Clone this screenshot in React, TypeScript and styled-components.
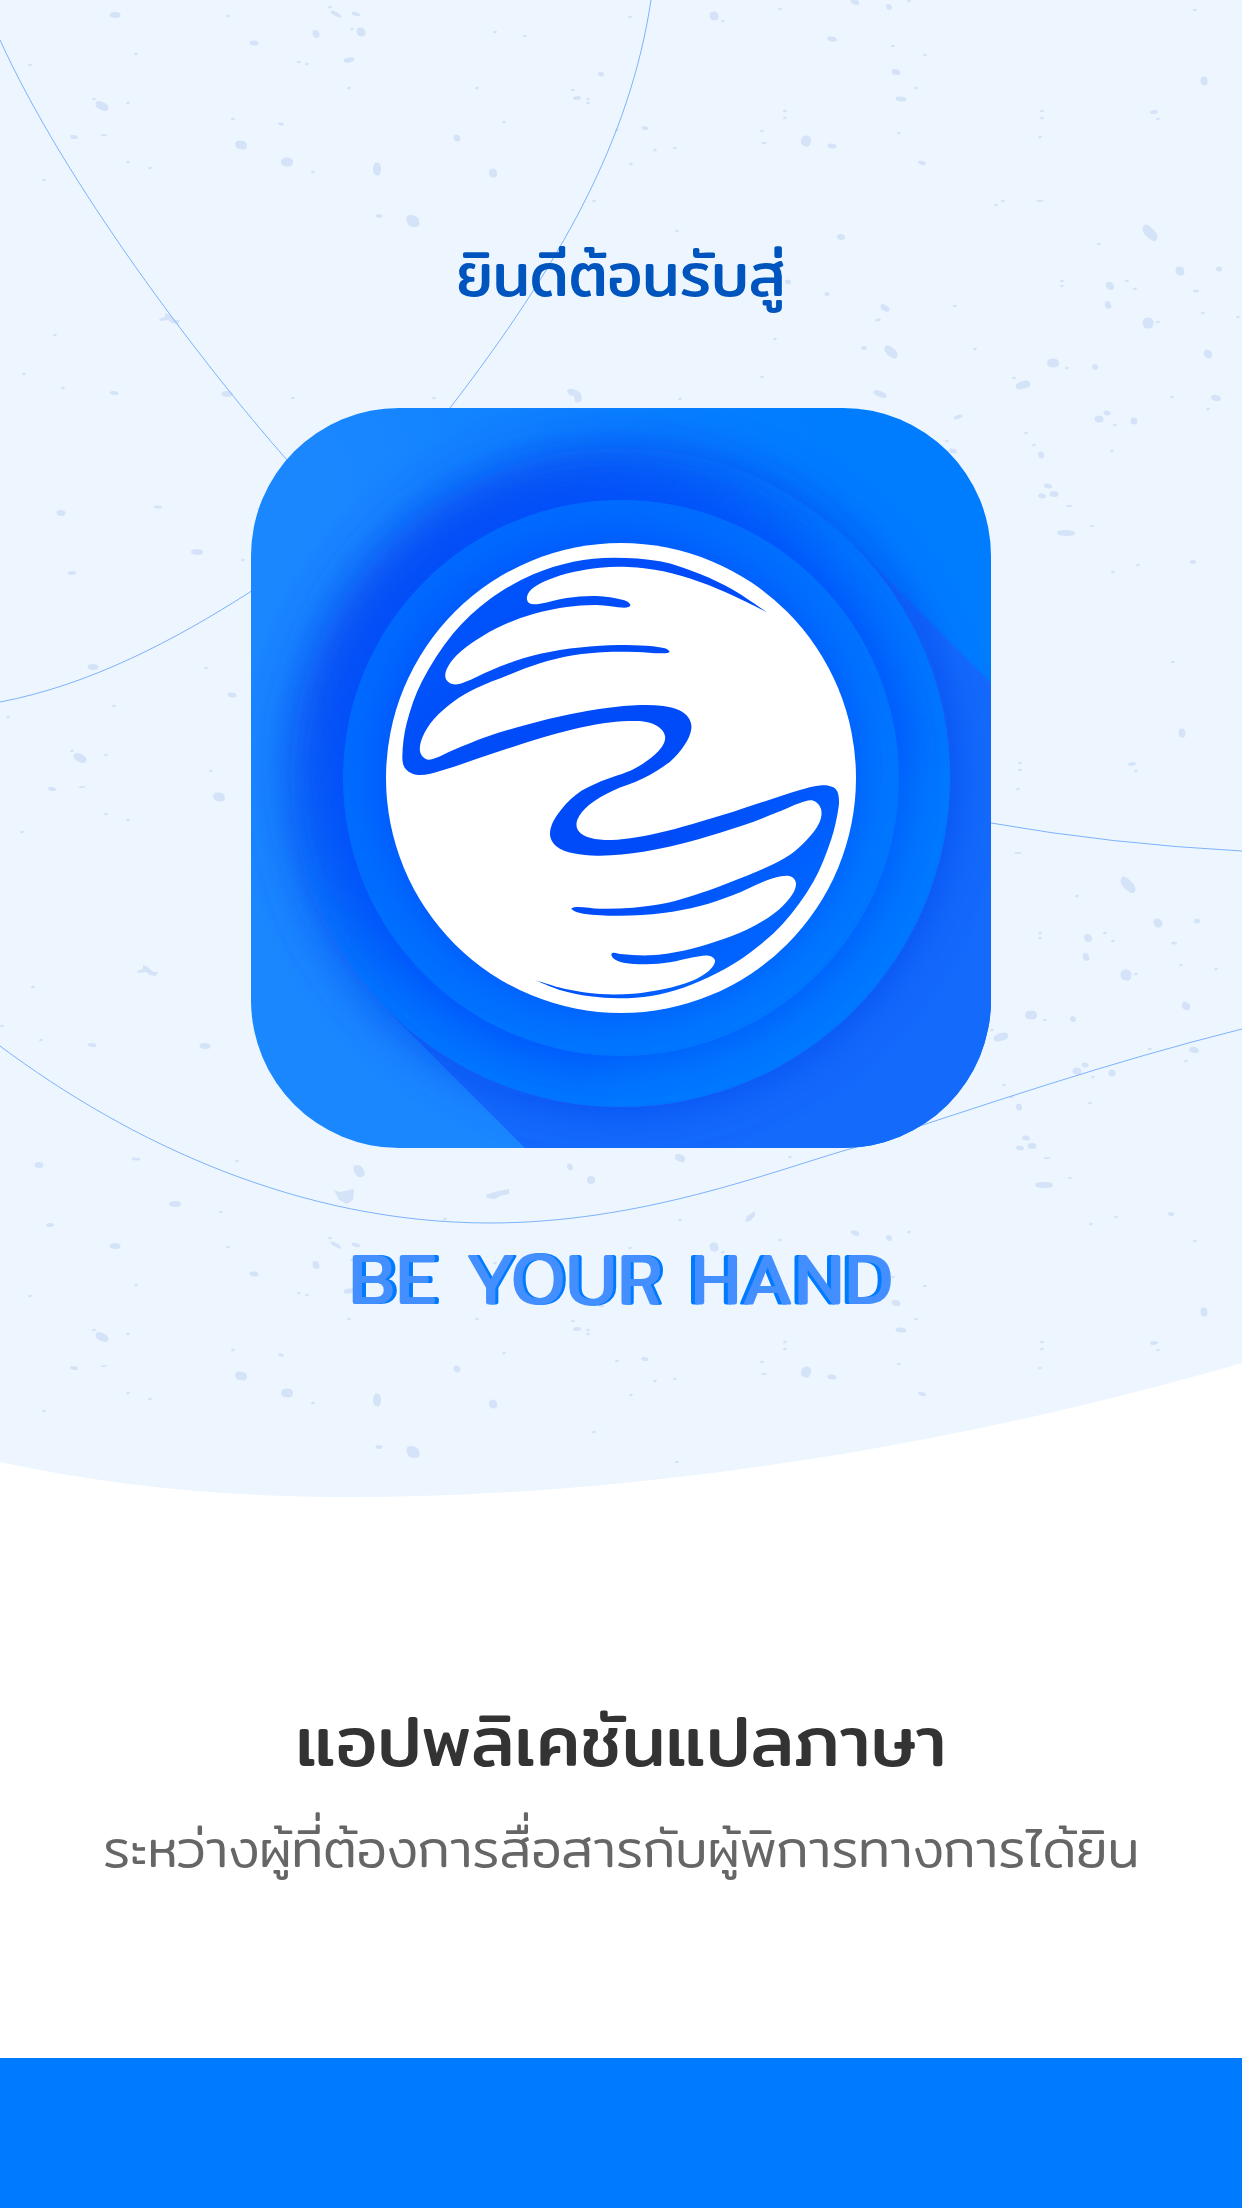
import React from "react";
import styled, { createGlobalStyle } from "styled-components";

const GlobalStyle = createGlobalStyle`
  *, *::before, *::after { box-sizing: border-box; }
  html, body, #root { margin: 0; min-height: 100vh; }
  body {
    background: #ffffff;
    font-family: Mitr, Prompt, Kanit, "Noto Sans Thai", "Noto Sans", sans-serif;
  }
`;

const Page = styled.main`
  display: flex;
  flex-direction: column;
  min-height: 100vh;
  overflow: hidden;
`;

const Hero = styled.header`
  position: relative;
  isolation: isolate;
  display: flex;
  flex-direction: column;
  align-items: center;
  padding: 230px 24px 182px;
`;

const Backdrop = styled.svg`
  position: absolute;
  z-index: -1;
  top: 0;
  left: 0;
  width: 100%;
  height: 100%;
`;

const Welcome = styled.p`
  margin: 0 0 90px;
  color: #0054bd;
  font-size: 60px;
  font-weight: 400;
  line-height: 88px;
`;

const Logo = styled.svg`
  display: block;
  width: 100%;
  max-width: 740px;
  height: auto;
  border-radius: 20%;
`;

const BrandName = styled.h1`
  margin: 90px 0 0;
  color: #448fff;
  font-size: 72px;
  font-weight: 400;
  line-height: 80px;
`;

const BrandWord = styled.span<{ $shade: number }>`
  text-shadow: ${({ $shade }) => $shade}px 0 0 #007bff;
`;

const Intro = styled.section`
  flex: 1;
  display: flex;
  flex-direction: column;
  align-items: center;
  gap: 8px;
  padding: 190px 24px 24px;
  text-align: center;
`;

const Headline = styled.h2`
  margin: 0;
  color: #333333;
  font-size: 71px;
  font-weight: 400;
  line-height: 100px;
`;

const Summary = styled.p`
  margin: 0;
  color: #666666;
  font-size: 52px;
  font-weight: 300;
  line-height: 100px;
`;

const Footer = styled.footer`
  height: 150px;
  background: #007bff;
`;

type Point = [number, number];

/* Draws a closed smooth curve through the points; the listed ones stay sharp. */
function smoothPath(points: Point[], sharp: Point[]): string {
  const n = points.length;
  const isSharp = (p: Point) => sharp.some((s) => s[0] === p[0] && s[1] === p[1]);
  const tangents = points.map((p, i) => {
    if (isSharp(p)) return [0, 0];
    const a = points[(i + n - 1) % n];
    const b = points[(i + 1) % n];
    const len = Math.hypot(b[0] - a[0], b[1] - a[1]) || 1;
    return [(b[0] - a[0]) / len, (b[1] - a[1]) / len];
  });
  let d = `M${points[0].join(" ")}`;
  for (let i = 0; i < n; i++) {
    const j = (i + 1) % n;
    const p = points[i];
    const q = points[j];
    const h = Math.hypot(q[0] - p[0], q[1] - p[1]) / 3;
    const c = [
      p[0] + tangents[i][0] * h,
      p[1] + tangents[i][1] * h,
      q[0] - tangents[j][0] * h,
      q[1] - tangents[j][1] * h,
      q[0],
      q[1],
    ];
    d += `C${c.map((v) => v.toFixed(1)).join(" ")}`;
  }
  return `${d}Z`;
}

const handPoints: Point[] = [
  [1545, 611], [1447, 546], [1347, 498], [1227, 460], [1087, 449], [967, 461], [847, 499], [717, 573],
  [607, 676], [512, 822], [467, 946], [454, 1046], [464, 1083], [502, 1101], [567, 1089], [727, 1036],
  [867, 991], [967, 964], [1057, 946], [1137, 939], [1207, 948], [1242, 984], [1222, 1030], [1150, 1082],
  [1050, 1120], [975, 1160], [918, 1222], [897, 1276], [915, 1314], [967, 1336], [1047, 1343], [1177, 1331],
  [1337, 1295], [1477, 1252], [1587, 1210], [1647, 1185], [1687, 1178], [1710, 1203], [1705, 1244], [1667, 1296],
  [1617, 1340], [1547, 1378], [1447, 1419], [1347, 1456], [1247, 1485], [1147, 1499], [1047, 1502], [977, 1497],
  [962, 1504], [997, 1517], [1107, 1523], [1237, 1515], [1347, 1494], [1447, 1461], [1537, 1421], [1590, 1405],
  [1623, 1407], [1635, 1430], [1617, 1469], [1567, 1518], [1487, 1565], [1397, 1600], [1297, 1628], [1197, 1642],
  [1107, 1638], [1083, 1636], [1086, 1650], [1117, 1664], [1187, 1669], [1257, 1663], [1327, 1648], [1373, 1643],
  [1392, 1658], [1374, 1688], [1322, 1719], [1240, 1743], [1147, 1757], [1047, 1758], [947, 1744], [852, 1716],
  [927, 1746], [1017, 1765], [1107, 1771], [1200, 1764], [1297, 1739], [1397, 1696], [1497, 1634], [1597, 1546],
  [1687, 1421], [1740, 1296], [1763, 1196], [1761, 1156], [1747, 1138], [1712, 1132], [1647, 1146], [1547, 1178],
  [1447, 1211], [1347, 1241], [1247, 1269], [1157, 1288], [1080, 1296], [1017, 1289], [982, 1268], [979, 1235],
  [1014, 1191], [1084, 1149], [1177, 1111], [1257, 1061], [1302, 1009], [1321, 962], [1313, 930], [1285, 907],
  [1237, 894], [1167, 891], [1067, 900], [957, 919], [827, 950], [707, 986], [607, 1026], [552, 1051],
  [524, 1053], [507, 1030], [515, 986], [549, 933], [607, 881], [677, 840], [767, 803], [867, 766],
  [967, 742], [1067, 732], [1157, 732], [1235, 736], [1255, 730], [1225, 718], [1147, 712], [1047, 713],
  [927, 726], [817, 751], [717, 788], [642, 822], [607, 829], [585, 814], [587, 784], [617, 742],
  [677, 695], [757, 651], [847, 618], [947, 597], [1037, 591], [1122, 599], [1138, 591], [1117, 576],
  [1037, 564], [947, 570], [867, 587], [835, 586], [828, 566], [845, 541], [892, 515], [967, 492],
  [1047, 479], [1132, 477], [1237, 490], [1347, 522], [1447, 563],
];

const handPath = smoothPath(handPoints, [[1545, 611], [852, 1716]]);

/* x, y, width, height, turn in degrees */
type Fleck = [number, number, number, number, number?];

const flecks: Fleck[] = [
  [115, 15, 11, 6], [336, 14, 12, 4, 25], [356, 14, 9, 4, 10], [316, 34, 7, 8], [361, 32, 9, 9], [254, 43, 9, 5],
  [349, 60, 11, 5, -15], [601, 74, 6, 5], [577, 98, 8, 4, -8], [102, 106, 14, 8, 22], [281, 124, 6, 3, 10],
  [74, 137, 8, 4], [104, 135, 7, 2, -8], [241, 145, 12, 9], [287, 162, 12, 9], [377, 169, 8, 13, 4], [457, 138, 7, 7],
  [493, 173, 8, 9, -15], [379, 216, 7, 4], [413, 221, 13, 12], [114, 393, 9, 4], [227, 394, 11, 6],
  [714, 16, 9, 9], [855, 2, 9, 5, 15], [889, 7, 6, 6], [832, 39, 10, 5, 10], [896, 72, 9, 6], [901, 99, 11, 5],
  [1204, 81, 7, 9], [1154, 112, 8, 4, -15], [764, 143, 6, 2], [806, 141, 10, 11, 20], [832, 146, 9, 5], [922, 163, 8, 4, 8],
  [645, 128, 7, 4], [841, 237, 8, 6, -10], [1040, 201, 8, 2], [1150, 233, 19, 10, 38], [1180, 271, 9, 9],
  [1219, 269, 6, 5], [788, 282, 6, 5], [827, 294, 5, 4], [885, 308, 10, 6, 20], [878, 320, 6, 3, -12], [1110, 286, 8, 8],
  [1108, 305, 6, 8, -20], [1196, 291, 6, 3], [1148, 323, 11, 11], [864, 348, 6, 4], [891, 352, 16, 9, 35],
  [1053, 363, 12, 9], [1095, 367, 6, 6], [1208, 354, 9, 8, 20], [1023, 385, 15, 8, -18], [880, 394, 14, 6, 18],
  [1216, 398, 10, 6, 10], [958, 417, 9, 4, -20], [1099, 419, 9, 7], [1107, 413, 7, 5], [1134, 421, 7, 7],
  [1041, 455, 6, 7], [953, 451, 8, 5], [1048, 486, 8, 5], [1042, 496, 8, 5], [1054, 494, 9, 6], [1069, 506, 7, 2],
  [1092, 526, 5, 2], [1066, 533, 18, 6], [1193, 562, 6, 4], [61, 513, 9, 6], [158, 507, 9, 3], [197, 552, 12, 6],
  [72, 573, 8, 4, -8], [702, 506, 11, 7, 20], [592, 515, 6, 7], [381, 519, 10, 13, -15], [613, 528, 8, 8, -10],
];

const dots: Point[] = [
  [228, 16], [330, 7], [352, 29], [136, 54], [30, 65], [299, 62], [307, 64], [349, 88], [495, 32], [525, 36],
  [477, 88], [573, 90], [588, 99], [588, 103], [94, 99], [128, 103], [233, 119], [313, 172], [128, 162],
  [150, 168], [44, 180], [504, 122], [594, 201], [617, 130], [55, 335], [24, 374], [63, 388], [293, 398],
  [434, 398], [630, 17], [723, 21], [780, 9], [909, 1], [1195, 10], [893, 46], [925, 55], [916, 88],
  [1158, 119], [1042, 111], [1042, 118], [1040, 137], [785, 111], [785, 118], [762, 131], [899, 133],
  [655, 150], [675, 148], [631, 164], [677, 231], [996, 205], [1003, 201], [1099, 244], [955, 306],
  [1062, 281], [1062, 286], [1127, 281], [1135, 289], [1203, 313], [1238, 317], [1158, 322], [775, 339],
  [975, 349], [1067, 368], [762, 377], [1014, 378], [680, 399], [1172, 397], [1208, 409], [1115, 425],
  [1026, 433], [1034, 445], [1112, 451], [947, 441], [1113, 572], [1138, 565], [243, 560], [259, 509],
  [467, 567], [812, 505], [702, 568],
];

function fleckPath([x, y, w, h]: Fleck): string {
  const a = w / 2;
  const b = h / 2;
  const lean = ((x * 7 + y * 3) % 5) / 10;
  return [
    `M${x - a} ${y - b * lean}`,
    `Q${x - a} ${y - b} ${x - a * lean} ${y - b}`,
    `Q${x + a} ${y - b} ${x + a} ${y + b * lean}`,
    `Q${x + a} ${y + b} ${x + a * 0.2} ${y + b}`,
    `Q${x - a} ${y + b} ${x - a} ${y - b * lean}Z`,
  ].join("");
}

function Terrazzo() {
  return (
    <g id="terrazzo">
      {flecks.map((f) => (
        <path key={`${f[0]}-${f[1]}`} d={fleckPath(f)} transform={`rotate(${f[4] ?? 0} ${f[0]} ${f[1]})`} />
      ))}
      {dots.map(([x, y]) => (
        <ellipse key={`${x}-${y}`} cx={x} cy={y} rx="2" ry="1.2" transform={`rotate(-12 ${x} ${y})`} />
      ))}
      <path d="M159 319L165 317L165 313L170 315L175 320L180 320L178 324L172 323L168 320L160 321Z" />
      <path d="M567 391Q568 388 573 389Q582 391 582 399Q580 404 575 402L574 396Q568 396 567 391Z" />
      <path d="M356 538L362 540L376 537L375 548L369 552L361 548Z" />
      <path d="M508 543L516 540L531 537L531 542L522 544L517 547L509 546Z" />
      <path d="M767 570L769 564L777 559L777 564L772 569Z" />
    </g>
  );
}

function HeroBackdrop() {
  return (
    <Backdrop viewBox="0 0 1242 1500" preserveAspectRatio="none" aria-hidden="true">
      <defs>
        <clipPath id="wave">
          <path d="M0 0H1242V1363C960 1445 640 1497 350 1497C225 1497 110 1486 0 1462Z" />
        </clipPath>
      </defs>
      <g clipPath="url(#wave)">
        <rect width="1242" height="1500" fill="#edf6ff" />
        <g fill="#d4e3f8">
          <Terrazzo />
          <use href="#terrazzo" x="-22" y="652" />
          <use href="#terrazzo" y="1231" />
        </g>
      </g>
      <g fill="none" stroke="#7db2fb" strokeWidth="1">
        <path d="M0 40C65 183 200 361 287 460C480 680 700 800 991 823Q1110 844 1242 851" />
        <path d="M651 0C630 140 560 265 450 408C390 485 320 550 250 592C175 640 90 685 0 702" />
        <path d="M0 1046C130 1143 300 1223 490 1223C640 1223 770 1172 853 1148C990 1103 1110 1062 1242 1029" />
      </g>
    </Backdrop>
  );
}

function AppLogo() {
  return (
    <Logo viewBox="0 0 740 740" role="img" aria-label="Be Your Hand">
      <defs>
        <linearGradient id="tile" x1="0" y1="0.4" x2="1" y2="0">
          <stop offset="0.2" stopColor="#1a87ff" />
          <stop offset="0.8" stopColor="#007cff" />
        </linearGradient>
        <linearGradient id="outer" x1="0.15" y1="0.15" x2="0.85" y2="0.85">
          <stop offset="0.05" stopColor="#0078ff" stopOpacity="0" />
          <stop offset="0.5" stopColor="#0076ff" stopOpacity="1" />
          <stop offset="1" stopColor="#007aff" />
        </linearGradient>
        <linearGradient id="inner" x1="0.15" y1="0.15" x2="0.85" y2="0.85">
          <stop offset="0" stopColor="#006aff" />
          <stop offset="1" stopColor="#0078ff" />
        </linearGradient>
        <linearGradient id="hand" x1="0.1" y1="0.1" x2="0.9" y2="0.9">
          <stop offset="0" stopColor="#0055fb" />
          <stop offset="0.3" stopColor="#004bf9" />
          <stop offset="0.65" stopColor="#004bf9" />
          <stop offset="0.9" stopColor="#0062ff" />
        </linearGradient>
        <filter id="soft" x="-30%" y="-30%" width="160%" height="160%">
          <feGaussianBlur stdDeviation="24" />
        </filter>
        <filter id="softer" x="-30%" y="-30%" width="160%" height="160%">
          <feGaussianBlur stdDeviation="36" />
        </filter>
        <clipPath id="discOuter">
          <circle cx="370" cy="370" r="329" />
        </clipPath>
        <clipPath id="discInner">
          <circle cx="370" cy="370" r="278" />
        </clipPath>
      </defs>
      <rect width="740" height="740" fill="url(#tile)" />
      <path d="M603 137L740 275V740H274L137 603Z" fill="#146afb" />
      <circle cx="370" cy="370" r="330" fill="#1048ee" opacity="0.8" filter="url(#soft)" />
      <circle cx="370" cy="370" r="329" fill="url(#outer)" />
      <circle cx="356" cy="356" r="280" fill="#0048f9" filter="url(#softer)" />
      <g clipPath="url(#discOuter)">
        <circle cx="374" cy="374" r="278" fill="#0052fc" opacity="0.7" filter="url(#soft)" />
        <path d="M640 360A275 275 0 0 1 360 640L350 720H740V350Z" fill="#007cff" opacity="0.35" filter="url(#soft)" />
      </g>
      <circle cx="370" cy="370" r="278" fill="url(#inner)" />
      <g clipPath="url(#discInner)">
        <circle cx="365" cy="365" r="237" fill="#0052fc" filter="url(#soft)" />
      </g>
      <circle cx="370" cy="370" r="235" fill="#ffffff" />
      <path d={handPath} fill="url(#hand)" transform="scale(0.33333)" />
    </Logo>
  );
}

export default function App() {
  return (
    <>
      <GlobalStyle />
      <Page lang="th">
        <Hero>
          <HeroBackdrop />
          <Welcome>ยินดีต้อนรับสู่</Welcome>
          <AppLogo />
          <BrandName>
            <BrandWord $shade={4}>BE</BrandWord> <BrandWord $shade={3}>YOUR</BrandWord>{" "}
            <BrandWord $shade={-4}>HAND</BrandWord>
          </BrandName>
        </Hero>
        <Intro>
          <Headline>แอปพลิเคชันแปลภาษา</Headline>
          <Summary>ระหว่างผู้ที่ต้องการสื่อสารกับผู้พิการทางการได้ยิน</Summary>
        </Intro>
        <Footer />
      </Page>
    </>
  );
}
